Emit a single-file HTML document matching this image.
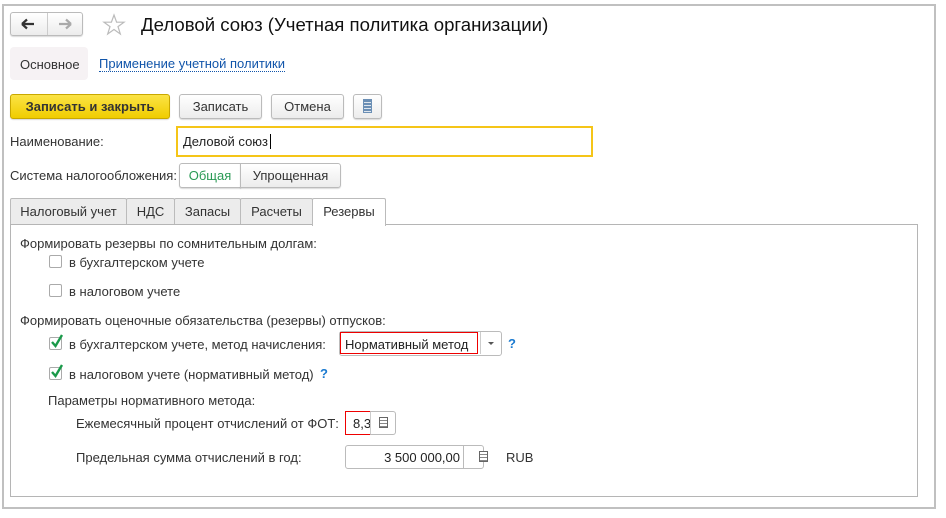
<!DOCTYPE html>
<html><head><meta charset="utf-8"><style>
body{margin:0;width:946px;height:518px;background:#fff;font-family:"Liberation Sans",Arial,sans-serif;font-size:13px;color:#333;position:relative;overflow:hidden}
.a{position:absolute;white-space:nowrap}
.btn{position:absolute;box-sizing:border-box;border:1px solid #bbb;border-radius:3px;background:linear-gradient(#fff,#ececec);text-align:center;box-shadow:0 1px 1px rgba(0,0,0,.15)}
.cb{position:absolute;width:13px;height:13px;border:1px solid #aaa;border-radius:2px;background:#fff;box-sizing:border-box}
.tab{position:absolute;top:198px;height:27px;box-sizing:border-box;border:1px solid #bbb;border-bottom:none;background:#ececec;line-height:26px;text-align:center;border-radius:2px 2px 0 0}
.calc{position:absolute;width:9px;height:11px;border:1px solid #666;box-sizing:border-box;background:repeating-linear-gradient(#fff 0 2px,#888 2px 3px)}
.q{color:#1a7ad0;font-weight:bold}
</style></head><body>
<div class="a" style="left:2px;top:4px;width:930px;height:501px;border:2px solid #c0c0c0"></div>
<div class="btn" style="left:10px;top:12px;width:73px;height:24px"></div>
<div class="a" style="left:47px;top:13px;width:1px;height:22px;background:#ccc"></div>
<svg class="a" style="left:20px;top:17px" width="16" height="14"><path d="M2 7H14M2 7L7 2.5M2 7L7 11.5" stroke="#333" stroke-width="2.2" fill="none"/></svg>
<svg class="a" style="left:57px;top:17px" width="16" height="14"><path d="M2 7H14M14 7L9 2.5M14 7L9 11.5" stroke="#aaa" stroke-width="2.2" fill="none"/></svg>
<svg class="a" style="left:102px;top:13px" width="24" height="24"><path d="M12 2L14.6 9.2H22L16 13.6L18.3 21L12 16.5L5.7 21L8 13.6L2 9.2H9.4Z" fill="none" stroke="#bbb" stroke-width="1.2"/></svg>
<div class="a" style="left:141px;top:14px;font-size:18.6px;color:#111">Деловой союз (Учетная политика организации)</div>
<div class="a" style="left:10px;top:47px;width:78px;height:33px;background:#f6f2f4;border-radius:4px"></div>
<div class="a" style="left:20px;top:57px;color:#333">Основное</div>
<div class="a" style="left:99px;top:57px;color:#1155aa;border-bottom:1px dotted #1155aa;line-height:14px">Применение учетной политики</div>
<div class="btn" style="left:10px;top:94px;width:160px;height:25px;background:linear-gradient(#fbe345,#f0cd00);border-color:#c9a800;font-weight:bold;line-height:23px;color:#333">Записать и закрыть</div>
<div class="btn" style="left:179px;top:94px;width:83px;height:25px;line-height:23px">Записать</div>
<div class="btn" style="left:271px;top:94px;width:73px;height:25px;line-height:23px">Отмена</div>
<div class="btn" style="left:353px;top:94px;width:29px;height:25px"></div>
<div class="a" style="left:363px;top:99px;width:9px;height:14px;background:repeating-linear-gradient(#6b8fb5 0 2px,#dfe6ee 2px 3px);border:1px solid #6b8fb5;box-sizing:border-box"></div>
<div class="a" style="left:10px;top:134px">Наименование:</div>
<div class="a" style="left:176px;top:126px;width:417px;height:31px;border:2px solid #f5c518;box-sizing:border-box"></div>
<div class="a" style="left:183px;top:134px;color:#222">Деловой союз <span style="border-left:1px solid #000;margin-left:2px"></span></div>
<div class="a" style="left:10px;top:168px">Система налогообложения:</div>
<div class="btn" style="left:179px;top:163px;width:62px;height:25px;line-height:23px;color:#2a9a55;background:#fff;border-radius:3px 0 0 3px">Общая</div>
<div class="btn" style="left:240px;top:163px;width:101px;height:25px;line-height:23px;border-radius:0 3px 3px 0">Упрощенная</div>
<div class="tab" style="left:10px;width:117px">Налоговый учет</div>
<div class="tab" style="left:126px;width:49px">НДС</div>
<div class="tab" style="left:174px;width:67px">Запасы</div>
<div class="tab" style="left:240px;width:73px">Расчеты</div>
<div class="a" style="left:10px;top:224px;width:906px;height:271px;border:1px solid #b5b5b5"></div>
<div class="tab" style="left:312px;width:74px;background:#fff;height:28px;z-index:2">Резервы</div>
<div class="a" style="left:20px;top:236px">Формировать резервы по сомнительным долгам:</div>
<div class="cb" style="left:49px;top:255px"></div><div class="a" style="left:69px;top:255px">в бухгалтерском учете</div>
<div class="cb" style="left:49px;top:284px"></div><div class="a" style="left:69px;top:284px">в налоговом учете</div>
<div class="a" style="left:20px;top:313px">Формировать оценочные обязательства (резервы) отпусков:</div>
<div class="cb" style="left:49px;top:337px"></div><svg class="a" style="left:50px;top:333px" width="14" height="16"><path d="M2 9L5.5 13L12 2" stroke="#1a9a4a" stroke-width="2.4" fill="none"/></svg>
<div class="a" style="left:69px;top:337px">в бухгалтерском учете, метод начисления:</div>
<div class="a" style="left:339px;top:331px;width:163px;height:25px;border:1px solid #bbb;border-radius:3px;box-sizing:border-box"></div>
<div class="a" style="left:340px;top:332px;width:138px;height:22px;border:1px solid #e00;box-sizing:border-box"></div>
<div class="a" style="left:345px;top:337px;color:#222">Нормативный метод</div>
<div class="a" style="left:480px;top:332px;width:1px;height:22px;background:#ccc"></div>
<div class="a" style="left:488px;top:342px;border:3px solid transparent;border-top:3px solid #555"></div>
<div class="a q" style="left:508px;top:336px">?</div>
<div class="cb" style="left:49px;top:367px"></div><svg class="a" style="left:50px;top:363px" width="14" height="16"><path d="M2 9L5.5 13L12 2" stroke="#1a9a4a" stroke-width="2.4" fill="none"/></svg>
<div class="a" style="left:69px;top:367px">в налоговом учете (нормативный метод)</div>
<div class="a q" style="left:320px;top:366px">?</div>
<div class="a" style="left:48px;top:393px">Параметры нормативного метода:</div>
<div class="a" style="left:76px;top:416px">Ежемесячный процент отчислений от ФОТ:</div>
<div class="a" style="left:345px;top:411px;width:26px;height:24px;border:1px solid #e00;box-sizing:border-box"></div>
<div class="a" style="left:353px;top:416px;color:#222;width:17px;overflow:hidden">8,30</div>
<div class="a" style="left:370px;top:411px;width:26px;height:24px;border:1px solid #bbb;border-left:1px solid #ccc;border-radius:0 3px 3px 0;box-sizing:border-box"></div>
<div class="calc" style="left:379px;top:417px"></div>
<div class="a" style="left:76px;top:450px">Предельная сумма отчислений в год:</div>
<div class="a" style="left:345px;top:445px;width:119px;height:24px;border:1px solid #bbb;border-radius:3px 0 0 3px;box-sizing:border-box"></div>
<div class="a" style="left:345px;top:450px;width:115px;text-align:right;color:#222">3 500 000,00</div>
<div class="a" style="left:463px;top:445px;width:21px;height:24px;border:1px solid #bbb;border-radius:0 3px 3px 0;box-sizing:border-box"></div>
<div class="calc" style="left:479px;top:451px"></div>
<div class="a" style="left:506px;top:450px">RUB</div>
</body></html>
